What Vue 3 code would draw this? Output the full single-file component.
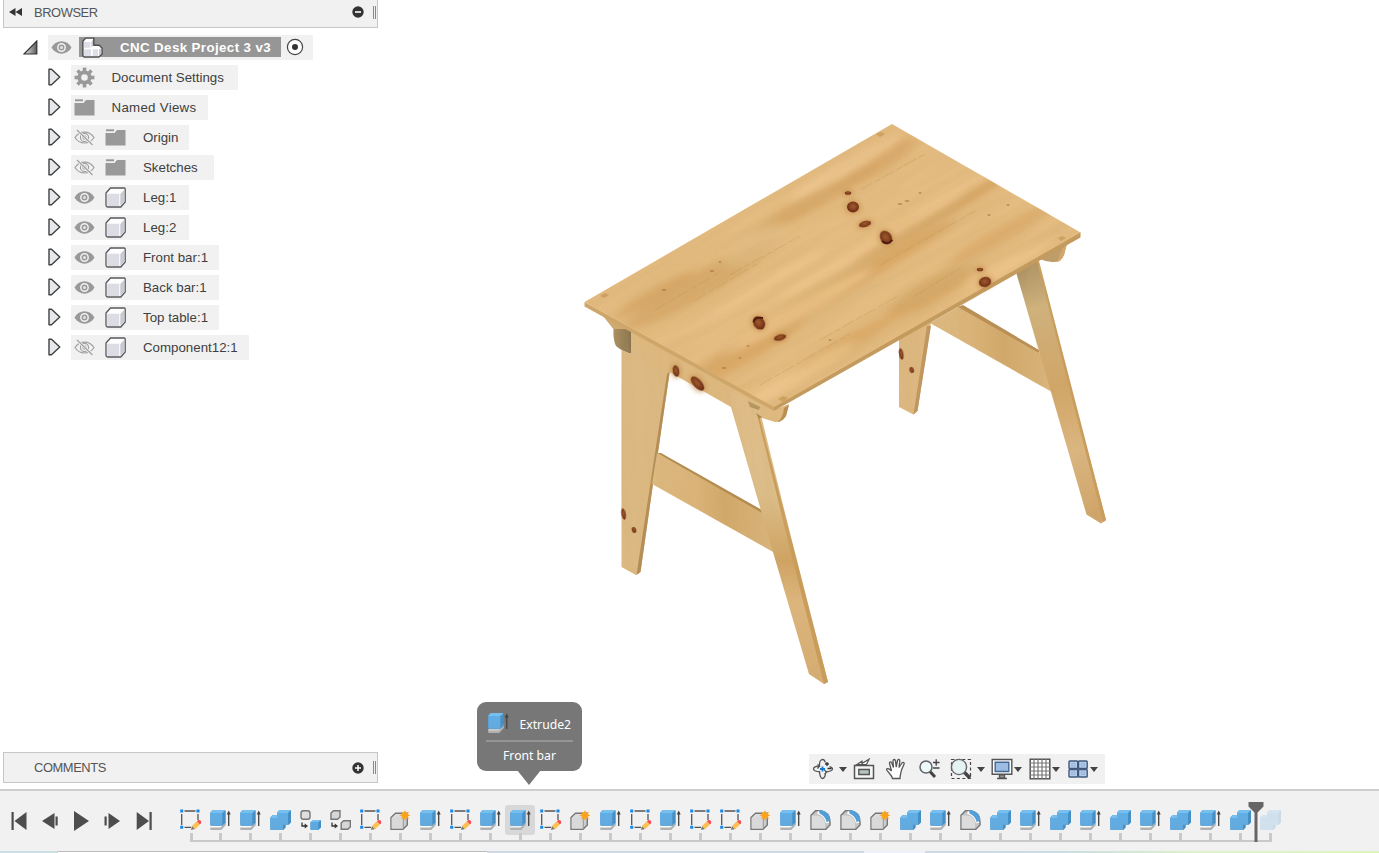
<script setup>
const rows = [
  { label: 'Document Settings', icon: 'gear', width: 167 },
  { label: 'Named Views', icon: 'folder', width: 137, loose: true },
  { label: 'Origin', eye: 'eye-off', icon: 'folder', width: 118 },
  { label: 'Sketches', eye: 'eye-off', icon: 'folder', width: 143 },
  { label: 'Leg:1', eye: 'eye', icon: 'body', width: 118 },
  { label: 'Leg:2', eye: 'eye', icon: 'body', width: 118 },
  { label: 'Front bar:1', eye: 'eye', icon: 'body', width: 148 },
  { label: 'Back bar:1', eye: 'eye', icon: 'body', width: 148 },
  { label: 'Top table:1', eye: 'eye', icon: 'body', width: 148 },
  { label: 'Component12:1', eye: 'eye-off', icon: 'body', width: 178 }
]

const steps = (
  'sketch extrude extrude combine component copy sketch form extrude sketch extrude extrude ' +
  'sketch form extrude sketch extrude sketch sketch form extrude fillet fillet form combine ' +
  'extrude fillet combine extrude combine extrude combine extrude combine extrude combine combine'
).split(' ')
const selectedStep = 11

const topKnots = [
  [848, 193, 3.2, 1.8, 0], [853, 207, 6, 5.4, 0], [865, 224, 6.2, 3, -15], [886, 237.5, 5.6, 7.2, -35],
  [980, 269.5, 3.2, 1.8, 0], [985, 282, 6.2, 5, -15], [759, 323, 5.6, 7.2, -35], [780, 337.5, 6.2, 3, -15]
]
const frameKnots = [
  [676, 371, 3.2, 5.8, -10], [697.5, 383.5, 4.2, 8.8, -42], [623.6, 514, 2.2, 5.8, -10],
  [634, 530, 2.2, 3, -20], [901.2, 354, 2.2, 5.8, -10], [911.7, 370, 2.2, 3, -20]
]
const streaks = [
  [700, 285, 85, 13, '#d3a464'], [815, 200, 70, 9, '#d3a361'], [880, 160, 42, 11, '#d5a565'],
  [935, 215, 95, 8, '#d19f5b'], [860, 275, 110, 9, '#d4a25d'], [740, 355, 75, 11, '#d5a35f'],
  [1000, 235, 60, 8, '#d9a968'], [930, 292, 50, 12, '#d1a25f'], [845, 345, 60, 8, '#d7a662'],
  [655, 295, 45, 7, '#d2a260'], [845, 168, 65, 7, '#efc994'], [740, 300, 100, 6, '#efc78f'],
  [870, 245, 110, 6, '#f0c78f'], [800, 310, 85, 7, '#f0c790'], [1010, 265, 50, 6, '#eec58d'],
  [800, 375, 65, 8, '#efc68e'], [960, 190, 60, 6, '#ecc38c'], [755, 245, 36, 15, '#dfbc84']
]
const specks = [
  [720, 262, 0], [712, 271, 1], [740, 358, 0], [724, 368, 1], [920, 193, 0], [989, 215, 0],
  [1008, 205, 0], [907, 201, 1], [900, 204, 1], [830, 340, 0], [748, 346, 0], [664, 290, 1]
]
</script>

<template>
  <div class="app">
    <svg class="defs" aria-hidden="true">
      <defs>
        <linearGradient id="blueFront" x1="0" y1="0" x2="0" y2="1">
          <stop offset="0" stop-color="#5faee6" /><stop offset="1" stop-color="#64a9dc" />
        </linearGradient>
        <linearGradient id="greyFront" x1="0" y1="0" x2="1" y2="1">
          <stop offset="0" stop-color="#e4e4e4" /><stop offset="1" stop-color="#c6c6c6" />
        </linearGradient>
        <linearGradient id="expander" x1="0" y1="0" x2="1" y2="0">
          <stop offset="0.2" stop-color="#cfcfcf" /><stop offset="1" stop-color="#5c5c5c" />
        </linearGradient>
      </defs>

      <symbol id="eye" viewBox="0 0 21 21">
        <path d="M.5 10.5C5 2.300 16 2.300 20.500 10.500C16 18.700 5 18.700 .5 10.500Z" fill="#999" />
        <circle cx="10.500" cy="10.500" r="3.700" fill="#999" stroke="#f1f1f1" stroke-width="1.500" />
        <circle cx="10.500" cy="10.500" r="1.500" fill="#e4e4e4" />
      </symbol>
      <symbol id="eye-off" viewBox="0 0 21 21">
        <g fill="none" stroke="#a0a0a0" stroke-width="1.200">
          <path d="M1 10.500C5.500 3.200 15.500 3.200 20 10.500C15.500 17.800 5.500 17.800 1 10.500Z" />
          <circle cx="10.500" cy="10.500" r="4.100" /><circle cx="10.500" cy="10.500" r="1.600" />
          <path d="M3 3L18.500 18" stroke="#f1f1f1" stroke-width="2.800" /><path d="M3 3L18.500 18" />
        </g>
      </symbol>
      <symbol id="gear" viewBox="0 0 21 21">
        <g fill="none" stroke="#999">
          <circle cx="10.500" cy="10.500" r="5.200" stroke-width="3.800" />
          <path v-for="a in 8" :key="a" d="M10.500 .6V4.500" stroke-width="3.600" :transform="`rotate(${a * 45} 10.500 10.500)`" />
        </g>
      </symbol>
      <symbol id="folder" viewBox="0 0 21 21">
        <path d="M.5 6H9.500L12 3H20.500V18.500H.5Z" fill="#999" /><path d="M1 3.300H9" stroke="#999" stroke-width="2" />
      </symbol>
      <symbol id="body" viewBox="0 0 21 21">
        <path d="M1 6L5.500 1H19.200Q20.200 1 20.200 2V15L15.800 20H3Q1 20 1 18Z" fill="#fdfdfe" stroke="#58585c" stroke-width="1.300" />
        <path d="M2.200 6.800H14.200V18.900H3.400Q2.200 18.900 2.200 17.700Z" fill="#dcdde4" />
        <path d="M15.300 7L19.300 2.800V14.600L15.300 18.900Z" fill="#c8c9d2" />
      </symbol>
      <symbol id="assembly" viewBox="0 0 21 21">
        <path d="M.9 4.200L3.700 1.100H11.800V8.300H17.200L20 10.900V16.900L16.900 20H2.200L.9 18.700Z" fill="#fff" stroke="#4c4c50" stroke-width="1.400" stroke-linejoin="round" />
        <path d="M1.900 5H8.300V10.800H1.900ZM1.900 12.300H9V19H2.600L1.900 18.300ZM10.700 12.300H16V19H10.700Z" fill="#dddee6" />
        <path d="M9.300 4.800L11 2.500V9L9.300 10.500ZM17 12.300L19.200 11.200V16.700L17 18.500Z" fill="#c9cad3" />
      </symbol>

      <symbol id="sketch" viewBox="0 0 24 24">
        <path d="M6.500 3H17.500M3.700 6V17M20 6V12M6.500 19.300H13" fill="none" stroke="#555" stroke-width="1.300" />
        <path d="M2.200 1.500H5.200V4.500H2.200ZM18.500 1.500H21.500V4.500H18.500ZM2.200 17.800H5.200V20.800H2.200Z" fill="#1687e8" />
        <path d="M13 21.900L14 18L17 21Z" fill="#777" />
        <path d="M14 18L18.600 13.400L21.800 16.600L17.200 21.200Z" fill="#fcc04e" />
        <path d="M18.800 13.300L20.500 12Q22 11.800 23 13Q23.500 14.400 22.900 15.200L21.800 16.400Z" fill="#f44d56" />
      </symbol>
      <symbol id="extrude" viewBox="0 0 24 24">
        <path d="M2.300 19.200H12.700L17.800 14V17L13.300 22H2.300Z" fill="#b1b1b1" />
        <path d="M2.300 18.900H12.600L17.800 13.500" fill="none" stroke="#fff" stroke-width="1" />
        <path d="M2.300 4.500L4.800 2H16.700Q17.700 2 17.700 3V14.500L14.500 17.800H3.300Q2.300 17.800 2.300 16.800Z" fill="#478fc5" />
        <path d="M2.300 4.500L4.800 2H16.700L17.400 2.300L14.300 5H2.300Z" fill="#77bfee" />
        <path d="M2.300 5H14.300V17.800H3.300Q2.300 17.800 2.300 16.800Z" fill="url(#blueFront)" />
        <g class="extrude-arrow"><path d="M20.700 4V18" stroke="#444" stroke-width="1.300" /><path d="M18.700 6.500L20.700 2.500L22.700 6.500Z" fill="#444" /></g>
      </symbol>
      <symbol id="combine" viewBox="0 0 24 24">
        <path d="M2.300 9.500L4.700 7H9.200V4.300L11.500 2H22Q23 2 23 3V14.500L20.800 16.700H17.700V19.600L15.300 22H3.300Q2.300 22 2.300 21Z" fill="#458fc5" />
        <path d="M2.300 9.700L4.700 7H9.200V4.400L11.500 2H22L22.700 2.300L20 5H10.500V9.900H2.300Z" fill="#77bfee" />
        <path d="M9.200 5H20V16.700H15V22H3.300Q2.300 22 2.300 21V9.900H9.200Z" fill="url(#blueFront)" />
      </symbol>
      <symbol id="component" viewBox="0 0 24 24">
        <rect x="3" y="2.800" width="9" height="8.500" rx="2.500" fill="#dedede" stroke="#777" stroke-width="1.400" />
        <path d="M4 14.500V18H7.500" fill="none" stroke="#333" stroke-width="1.300" /><path d="M6.700 15.500L10 18L6.700 20.500Z" fill="#333" />
        <path d="M12.500 14.500L15 12H22Q23 12 23 13V19.500L20.300 22H13.500Q12.500 22 12.500 21Z" fill="#438ec8" />
        <path d="M12.500 14.500L15 12H22.500L20.300 14.500Z" fill="#77bfee" /><path d="M12.500 14.500H20.300V22H13.500Q12.500 22 12.500 21Z" fill="#5ca9df" />
      </symbol>
      <symbol id="copy" viewBox="0 0 24 24">
        <g fill="#d7d7d7" stroke="#777" stroke-width="1.400">
          <path d="M3 5L5.500 2.700H12V9L9.500 11.300H3Z" /><path d="M13.200 15L15.700 12.700H22.300V19L19.800 21.300H13.200Z" />
        </g>
        <path d="M4 14.500V18H7.500" fill="none" stroke="#333" stroke-width="1.300" /><path d="M6.700 15.500L10 18L6.700 20.500Z" fill="#333" />
      </symbol>
      <symbol id="form" viewBox="0 0 24 24">
        <path d="M3 9.500L7.500 5.300H19.300V17L15 21.300H3Z" fill="url(#greyFront)" stroke="#777" stroke-width="1.400" />
        <path d="M3.700 9.900H14.800V20.600H3.700Z" fill="#d9d9d9" /><path d="M15.300 10V20.600" stroke="#999" />
        <path d="M17 2L18.300 5L21 3.500L19.800 6.300L22.500 7.300L19.800 8.500L21 11.300L18.300 10L17 12.700L15.700 10L13 11.300L14.200 8.500L11.500 7.300L14.200 6.300L13 3.500L15.700 5Z" fill="#fba31d" />
      </symbol>
      <symbol id="fillet" viewBox="0 0 24 24">
        <path d="M3 7.300L7.500 2.700H11.500Q22 4 22 14V17L17.800 21.300H3Z" fill="#c4c4c4" stroke="#777" stroke-width="1.400" />
        <path d="M3.700 7.500H8.500Q16.800 8.300 17 16V20.600H3.700Z" fill="#dcdcdc" />
        <path d="M9.500 4.500Q17.500 6 19.500 15" fill="none" stroke="#fff" stroke-width="3.200" />
        <path d="M11.300 2H13.500Q21.500 4.500 22.500 11.500L18.700 14.500Q17.500 8 11.300 5.200Z" fill="#529fd7" />
      </symbol>
    </svg>

    <main class="workspace">
      <svg class="scene" viewBox="0 0 1379 788" width="1379" height="788" aria-label="Desk model">
        <defs>
          <filter id="soft" x="-30%" y="-60%" width="160%" height="220%"><feGaussianBlur stdDeviation="7 3.500" /></filter>
          <filter id="knotSoft" x="-50%" y="-50%" width="200%" height="200%"><feGaussianBlur stdDeviation=".6" /></filter>
          <filter id="halo" x="-80%" y="-80%" width="260%" height="260%"><feGaussianBlur stdDeviation="2" /></filter>
          <filter id="grain" x="0" y="0" width="100%" height="100%">
            <feTurbulence type="fractalNoise" baseFrequency=".008 .08" numOctaves="3" seed="7" />
            <feColorMatrix values="0 0 0 0 .64  0 0 0 0 .43  0 0 0 0 .18  1.800 0 0 0 -.74" />
          </filter>
          <radialGradient id="knot" cx=".5" cy=".45">
            <stop offset="0" stop-color="#9c5a2f" /><stop offset=".6" stop-color="#87421f" /><stop offset="1" stop-color="#6a2c14" />
          </radialGradient>
          <linearGradient id="board" x1="0" y1="0" x2="1" y2="0">
            <stop offset="0" stop-color="#dcb980" /><stop offset=".35" stop-color="#dab379" /><stop offset=".6" stop-color="#d1a86a" /><stop offset="1" stop-color="#d9b57d" />
          </linearGradient>
          <linearGradient id="leg" x1="0" y1="0" x2="0" y2="1">
            <stop offset="0" stop-color="#dfbb86" /><stop offset=".35" stop-color="#dcbe8a" /><stop offset=".58" stop-color="#cfa363" /><stop offset=".72" stop-color="#ddb67e" /><stop offset="1" stop-color="#d4ac71" />
          </linearGradient>
          <linearGradient id="farLeg" gradientUnits="userSpaceOnUse" x1="1025" y1="262" x2="1085" y2="515">
            <stop offset="0" stop-color="#a58c60" /><stop offset=".18" stop-color="#cfb27d" /><stop offset=".5" stop-color="#d1a567" /><stop offset=".75" stop-color="#dbb681" /><stop offset="1" stop-color="#d0a56b" />
          </linearGradient>
          <linearGradient id="bracket" x1="0" y1="0" x2="1" y2="0">
            <stop offset="0" stop-color="#c9a872" /><stop offset="1" stop-color="#86714d" />
          </linearGradient>
          <clipPath id="topClip"><path d="M584.500 302L892 124L1080.500 232.500L774 407Z" /></clipPath>
          <clipPath id="frameClip">
            <path d="M621.500 325L760 395L759 417L828 682L824 684L809 674L773 552L653 484L640.500 572L636 575L621.500 567ZM669.500 372L658 453L762 513L731 407Z" clip-rule="evenodd" />
            <path d="M899 330L931 310L1038 258L1106 520L1101 523.500L1086.500 514.500L1051 392L931 324L917.500 411L913.500 414.500L899 407ZM960 307L1038.500 353L1016 274Z" clip-rule="evenodd" />
          </clipPath>
        </defs>

        <!-- rear frame -->
        <path d="M899 335L932 315L917.500 411L913.500 414.500L899 407Z" fill="#dcb77f" />
        <path d="M927 326H931L917.500 411L913.500 414.500Z" fill="#bf975f" />
        <path d="M930 323L960 306L1042 354L1052 392Z" fill="url(#board)" />
        <path d="M958 307L963 305L1039 350V353Z" fill="#b98f56" />
        <path d="M1016 272L1038 260L1067 373L1106 520L1101 523.500L1086.500 514.500L1051 392Z" fill="url(#farLeg)" />
        <path d="M1037 262L1039 261L1106 520L1103.500 522Z" fill="#c99d5c" />
        <path d="M1040 259L1067 242L1064 255Q1060 263 1052 262Q1046 262 1040 259Z" fill="#bd9d6a" />
        <path d="M1062 249L1067 244L1064 255Q1061 262 1057 262Z" fill="#d3a869" />

        <!-- front frame -->
        <path d="M600 312L632 331V354Q623 352 616 346Q613 341 613.500 329L604 317Z" fill="url(#bracket)" />
        <path d="M600 312L630 329L614 329L604 317Z" fill="#d1aa70" />
        <path d="M621.500 350L631 354V330L673 352L653 484L640.500 572L636 575L621.500 567Z" fill="#dcb982" />
        <path d="M667 374L669.500 372L658 453L653 484L640.500 572L636.500 575Z" fill="#b48c55" />
        <path d="M631 331L774 410L789 404L786 416Q782 422 775 422L759 417L731 407L669.500 372L650 370Z" fill="#ddb87f" />
        <path d="M657 453L764 512L775 553L652 484Z" fill="url(#board)" />
        <path d="M657 453L661 453L762 510V513Z" fill="#b48c50" />
        <path d="M730 391L758 403L790 533L828 682L824 684L809 674L773 552L731 407Z" fill="url(#leg)" />
        <path d="M757 414L759.500 417L828 682L824 684L789 545Z" fill="#c99c5b" />
        <path d="M784 408L789 405L786 416Q782 422 777 422Q783 419 784 408Z" fill="#bb8f51" />
        <path d="M748 401L760 407L759 410L750 407Z" fill="#b4955f" />
        <path d="M756 413L762 417L759 419Z" fill="#b08850" />

        <g clip-path="url(#frameClip)">
          <g transform="rotate(86 850 450)"><rect x="560" y="170" width="580" height="600" filter="url(#grain)" opacity=".36" /></g>
        </g>

        <!-- table top -->
        <path d="M584.500 302L774 406V411L584.500 306.500Z" fill="#cfa669" />
        <path d="M774 406L1080.500 232V237.500L774 411Z" fill="#c49b5e" />
        <path d="M584.500 302L892 124L1080.500 232.500L774 407Z" fill="#e4bb80" />
        <g clip-path="url(#topClip)">
          <ellipse v-for="(s, i) in streaks" :key="i" :cx="s[0]" :cy="s[1]" :rx="s[2]" :ry="s[3]" :fill="s[4]" opacity=".75" filter="url(#soft)" :transform="`rotate(-30 ${s[0]} ${s[1]})`" />
          <g transform="rotate(-30 830 270)"><rect x="520" y="40" width="620" height="460" filter="url(#grain)" opacity=".42" /></g>
          <g fill="none" stroke="#bf8f4f" stroke-width=".7" opacity=".5">
            <path d="M655 310L720 272M694 301L760 262M880 265L975 211M820 340L900 295M860 190L925 154M760 385L850 334M915 296L960 268M730 275L800 236" stroke-dasharray="14 3 6 2" />
          </g>
          <g fill="#a8723c" opacity=".6">
            <ellipse v-for="(p, i) in specks" :key="i" :cx="p[0]" :cy="p[1]" :rx="p[2] ? 2.400 : 1.500" ry=".9" />
          </g>
        </g>
        <path d="M600 296L605 293L609 295L604 298ZM876 134L881 132L885 134L880 137ZM1058 238L1062 236L1066 238L1061 241ZM778 399L783 396L788 398L783 402Z" fill="#cda160" />

        <g v-for="(k, i) in topKnots.concat(frameKnots)" :key="i" :transform="`rotate(${k[4]} ${k[0]} ${k[1]})`">
          <ellipse v-if="i < 10" :cx="k[0]" :cy="k[1]" :rx="k[2] + 2.500" :ry="k[3] + 2" fill="#c58c4b" opacity=".55" filter="url(#halo)" />
          <ellipse :cx="k[0]" :cy="k[1]" :rx="k[2]" :ry="k[3]" fill="url(#knot)" filter="url(#knotSoft)" />
        </g>
        <path d="M882 241Q887 246 892.500 240M753.500 322Q755 316.500 763 318" fill="none" stroke="#4a1a10" stroke-width="1.800" />
      </svg>

      <aside class="side">
        <section>
          <header class="panel-head browser-head">
            <svg class="collapse" viewBox="0 0 13 8"><path d="M6.500 0V8L0 4ZM13 0V8L6.500 4Z" fill="#333" /></svg>
            <span class="panel-title">BROWSER</span>
            <svg class="toggle" viewBox="0 0 12 12"><circle cx="6" cy="6" r="5.700" fill="#333" /><path d="M3 6H9" stroke="#fff" stroke-width="1.600" /></svg>
            <i class="grip"></i>
          </header>
          <ul class="tree">
            <li class="root">
              <svg class="root-arrow" viewBox="0 0 15 15"><path d="M1 14L13.800 1V14Z" fill="url(#expander)" stroke="#333" stroke-width="1.200" /></svg>
              <div class="root-item">
                <svg class="ico"><use href="#eye" /></svg>
                <div class="root-label"><svg class="ico"><use href="#assembly" /></svg><b>CNC Desk Project 3 v3</b></div>
                <svg class="radio" viewBox="0 0 18 18"><circle cx="9" cy="9" r="7.600" fill="#fff" stroke="#444" stroke-width="1.200" /><circle cx="9" cy="9" r="3" fill="#333" /></svg>
              </div>
            </li>
            <li v-for="row in rows" :key="row.label" class="row">
              <svg class="arrow" viewBox="0 0 13 18"><path d="M1 1.200H3.500L11.800 9L3.500 16.800H1Z" fill="#e6e9ec" stroke="#404040" stroke-width="1.400" stroke-linejoin="round" /></svg>
              <div class="item" :style="{ width: row.width + 'px' }">
                <svg v-if="row.eye" class="ico"><use :href="'#' + row.eye" /></svg>
                <svg class="ico"><use :href="'#' + row.icon" /></svg>
                <span class="label" :class="{ loose: row.loose }">{{ row.label }}</span>
              </div>
            </li>
          </ul>
        </section>
        <header class="panel-head comments-head">
          <span class="panel-title">COMMENTS</span>
          <svg class="toggle" viewBox="0 0 12 12"><circle cx="6" cy="6" r="5.700" fill="#333" /><path d="M3 6H9M6 3V9" stroke="#fff" stroke-width="1.500" /></svg>
          <i class="grip"></i>
        </header>
      </aside>

      <nav class="navbar">
        <svg width="22" viewBox="0 0 22 22">
          <g fill="none" stroke="#555" stroke-width="1.300">
            <path d="M8 13.800C3 13.500 1.500 12 1.500 11C1.500 9.500 4 8.300 7 8M13.500 14C18 13.500 20.500 12.200 20.500 11C20.500 10 19.500 9.200 17.500 8.700" />
            <path d="M7.500 9V6.500C7.500 3.500 9 1.500 10.500 1.500C12 1.500 13 3 13.200 4.500M7.500 13C7.500 17.500 9 20.500 10.500 20.500C12 20.500 13.500 18 13.500 15M12.500 12L14.500 14L12.500 16.500M5.500 10.500L7.500 8L5.500 6.500" />
            <path d="M13 6H17M15 4V8M15.500 10.500H19.500" stroke="#333" />
          </g><path d="M8 11H13M10.500 8.500V13.500" stroke="#1679d4" stroke-width="1.800" />
        </svg>
        <i class="caret"></i>
        <svg width="22" viewBox="0 0 22 22"><path d="M4 6.500L9 3.200V5.500L16 1.200L13.500 6.500Z" fill="#fff" stroke="#555" stroke-width="1.200" /><path d="M1.500 7.500H20.500V20.500H1.500Z" fill="#f6f6f6" stroke="#555" stroke-width="1.500" /><path d="M5.800 11.500H16.300V16.500H5.800Z" fill="#b9c3c5" stroke="#555" stroke-width="1.400" /></svg>
        <svg width="22" viewBox="0 0 22 22"><path d="M7.500 20.500C7 17 3 14.500 1.500 11.500C1.500 10 4 10.200 6.500 13L4.500 5.500C4.300 3.500 6.300 3.400 6.800 5L8.500 9.500L8 3C8 1 10.200 1 10.500 3L11.200 9L12.500 2.500C13 .8 15 1.300 14.800 3.200L14 9.500L17 5C18 3.500 19.700 4.700 19 6.300L16.500 12C16 15 15 17 15 20.500Z" fill="#fff" stroke="#555" stroke-width="1.300" /></svg>
        <svg width="22" viewBox="0 0 22 22"><path d="M12 13.500L17 19" stroke="#444" stroke-width="3" /><circle cx="8" cy="9" r="6" fill="#eefafa" stroke="#606468" stroke-width="1.500" /><path d="M15 4.500H21.500M18.200 1.300V7.700M15 10H21.500" stroke="#444" stroke-width="1.300" /></svg>
        <svg width="22" viewBox="0 0 22 22"><path d="M1.500 1.500H20.500V20.500H1.500Z" fill="none" stroke="#444" stroke-width="1.200" stroke-dasharray="3 2.400" /><path d="M14 14L20 20" stroke="#444" stroke-width="3.500" /><circle cx="9" cy="9" r="7.600" fill="#e4f2f1" stroke="#666" stroke-width="1.400" /></svg>
        <i class="caret"></i>
        <svg width="22" viewBox="0 0 22 22"><path d="M1.200 1.500H20.800V16.300H1.200Z" fill="#fff" stroke="#555" stroke-width="1.400" /><path d="M4.200 4.300H17.800V13.500H4.200Z" fill="#9dbce4" stroke="#426898" stroke-width="1.400" /><path d="M8.500 16.800H13.500V20H8.500ZM6 20.500H16" fill="#999" stroke="#555" stroke-width="1.400" /></svg>
        <i class="caret near"></i>
        <svg width="22" viewBox="0 0 22 22"><path d="M1.200 1.200H20.800V20.800H1.200Z" fill="#fff" stroke="#555" stroke-width="1.500" /><path d="M5 1V21M9 1V21M13 1V21M17 1V21M1 5H21M1 9H21M1 13H21M1 17H21" stroke="#777" stroke-width="1.200" /></svg>
        <i class="caret near"></i>
        <svg width="22" viewBox="0 0 22 22"><g fill="#b4cdec" stroke="#42597b" stroke-width="1.400"><rect x="2" y="3" width="8.700" height="7.500" rx=".8" /><rect x="11.500" y="3" width="8.700" height="7.500" rx=".8" /><rect x="2" y="11.500" width="8.700" height="7.500" rx=".8" /><rect x="11.500" y="11.500" width="8.700" height="7.500" rx=".8" /></g><path d="M4.800 5.500H8V8H4.800ZM14.300 5.500H17.500V8H14.300ZM4.800 14H8V16.500H4.800ZM14.300 14H17.500V16.500H14.300Z" fill="none" stroke="#8eacd4" stroke-width=".8" /></svg>
        <i class="caret near"></i>
      </nav>

      <div class="tooltip">
        <div class="tip-top">
          <svg class="tip-icon" viewBox="0 0 24 24"><use href="#extrude" /></svg><span>Extrude2</span>
        </div>
        <div class="tip-sub">Front bar</div>
      </div>
    </main>

    <footer class="timeline">
      <div class="controls">
        <svg viewBox="0 0 31 20"><path d="M7.500 1V19H9.700V1ZM22.500 1V19L10.500 10Z" /></svg>
        <svg viewBox="0 0 31 20"><path d="M7 10L19.500 2V18ZM20.500 5.500H22.700V14.500H20.500Z" /></svg>
        <svg viewBox="0 0 31 20"><path d="M8 0V20L23 10Z" /></svg>
        <svg viewBox="0 0 31 20"><path d="M23 10L11.500 2V18ZM7.500 5.500H9.700V14.500H7.500Z" /></svg>
        <svg viewBox="0 0 31 20"><path d="M8.700 1V19L21 10ZM21.500 1V19H23.700V1Z" /></svg>
      </div>
      <div class="track">
        <div v-for="(step, i) in steps" :key="i" class="step" :class="{ selected: i === selectedStep, pending: i === steps.length - 1, first: i === 0 }">
          <span class="step-icon"><svg viewBox="0 0 24 24"><use :href="'#' + step" /></svg></span>
          <i class="tick"></i>
        </div>
        <svg class="marker" viewBox="0 0 16 40"><path d="M.5 0H15.500V4.500L9.500 10.500V40H6.500V10.500L.5 4.500Z" fill="#666" /></svg>
      </div>
    </footer>
    <div class="desktop-edge"><i class="e1"></i><i class="e2"></i><i class="e3"></i><i class="e4"></i><i class="e5"></i></div>
  </div>
</template>

<style>
body { margin: 0; overflow: hidden; background: #fff; }
</style>

<style scoped>
.app { width: 1379px; height: 853px; display: flex; flex-direction: column; overflow: hidden; background: #fff; color: #404040; font-family: "Liberation Sans", Arial, sans-serif; }
.app svg { display: block; flex: none; }
.app .defs { position: absolute; width: 0; height: 0; }
.workspace { position: relative; height: 789px; flex: none; }
.scene { position: absolute; inset: 0; }
.side { position: relative; width: 375px; height: 783px; margin-left: 3px; display: flex; flex-direction: column; justify-content: space-between; }
.panel-head { display: flex; align-items: center; box-sizing: border-box; background: #f1f1f1; border: 1px solid #c6c6c6; font-size: 12.9px; }
.browser-head { height: 28px; border-top: 0; border-bottom-width: 1.500px; padding: 0 0 3px 5px; }
.comments-head { height: 31px; padding-left: 30px; }
.collapse { width: 13px; height: 8px; margin-right: 12px; }
.panel-title { flex: 1; letter-spacing: -.42px; color: #555; }
.toggle { width: 12px; height: 12px; margin-right: 9px; }
.grip { width: 1px; height: 13px; border-left: 1px solid #888; border-right: 1px solid #888; margin-right: 1px; }
.tree { list-style: none; margin: 4px 0 0; padding: 0; }
.row, .root { height: 30px; display: flex; align-items: center; }
.root { padding-left: 20px; }
.root-arrow { width: 15px; height: 15px; margin-right: 10px; }
.root-item { display: flex; align-items: center; box-sizing: border-box; width: 265px; height: 25px; padding-left: 3px; background: #f1f1f1; }
.root-label { display: flex; align-items: center; box-sizing: border-box; width: 202px; height: 20px; margin: 0 5px 0 7px; padding-left: 3px; gap: 17px; background: #969696; color: #fff; font-size: 13.3px; letter-spacing: .4px; white-space: nowrap; }
.radio { width: 18px; height: 18px; }
.row { padding-left: 45px; }
.arrow { width: 13px; height: 18px; margin-right: 9.500px; }
.item { display: flex; align-items: center; box-sizing: border-box; height: 25px; padding-left: 3px; gap: 10.500px; background: #f1f1f1; }
.ico { width: 21px; height: 21px; }
.label { margin-left: 6.500px; font-size: 13.3px; white-space: nowrap; }
.loose { letter-spacing: .28px; }
.navbar { position: absolute; left: 809px; top: 754px; width: 296px; height: 30px; box-sizing: border-box; padding-left: 3px; display: flex; align-items: center; background: #f1f1f1; }
.navbar svg { height: 22px; }
.navbar svg + svg { margin-left: 10.300px; }
.caret { flex: none; width: 0; height: 0; border: 4px solid transparent; border-top: 5px solid #444; border-bottom: 0; margin: 0 6px 0 5px; }
.caret.near { margin: 0 6.500px 0 1.500px; }
.tooltip { position: absolute; left: 477px; top: 702px; width: 105px; height: 69px; box-sizing: border-box; padding: 8px 9px 0; border-radius: 9px; background: #777; color: #fff; font-family: "Noto Sans", "Open Sans", sans-serif; font-size: 12.2px; }
.tooltip::after { content: ""; position: absolute; left: 40px; top: 68px; border: 12.500px solid transparent; border-top: 15px solid #777; border-bottom: 0; }
.tip-top { height: 32px; display: flex; align-items: center; justify-content: space-between; border-bottom: 2px solid #959595; box-sizing: border-box; padding: 0 2px 4px 0; }
.tip-top span { padding-top: 2px; }
.tip-icon { width: 24px; height: 24px; }
.tip-sub { text-align: center; line-height: 28px; }
.timeline { position: relative; height: 62px; flex: none; display: flex; box-sizing: border-box; border-top: 2px solid #cecece; background: #f1f1f1; }
.controls { display: flex; padding: 20px 16px 0 4px; }
.controls svg { width: 31px; height: 20px; fill: #4d4d4d; }
.track { position: relative; display: flex; align-items: flex-start; padding-top: 14px; height: 37px; }
.step { width: 30px; height: 37px; box-sizing: border-box; display: flex; flex-direction: column; align-items: center; border-bottom: 2px solid #c9c9c9; flex: none; }
.step-icon { display: flex; align-items: center; justify-content: center; width: 30px; height: 30px; border-radius: 3px; flex: none; }
.step-icon svg { width: 24px; height: 24px; }
.selected .step-icon { background: #d8d8d8; }
.pending svg { opacity: .22; }
.tick { width: 2.500px; height: 7px; margin: -2px 0 0 1px; background: #c9c9c9; flex: none; }
.first { border-image: linear-gradient(90deg, transparent 50%, #c9c9c9 50%) 1; border-width: 0 0 2px; border-style: solid; }
.first .tick { margin-left: 3px; }
.pending { border-image: linear-gradient(90deg, #c9c9c9 56%, transparent 56%) 1; border-width: 0 0 2px; border-style: solid; }
.marker { position: absolute; left: 1072.500px; top: 11px; width: 16px; height: 40px; }
.desktop-edge { display: flex; height: 2px; }
.e1 { width: 58px; background: #cce0e4; }
.e2 { width: 429px; background: #fff; border-top: 1px solid #bcbcbc; box-sizing: border-box; }
.e3 { width: 377px; background: #d0d8e3; }
.e4 { width: 61px; background: #edf2f9; }
.e5 { flex: 1; background: linear-gradient(90deg, #d0d8e3, #cadde3 30%, #def1cb 60%, #dcf3bd); }
</style>
